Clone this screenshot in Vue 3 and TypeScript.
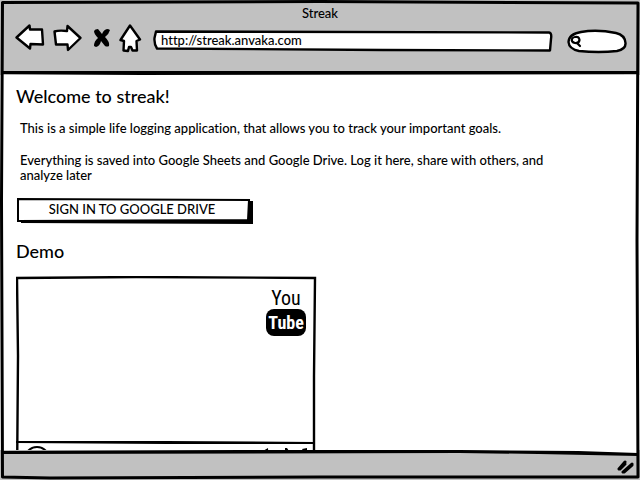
<script setup lang="ts">
import { ref } from 'vue'

const address = ref<string>('http://streak.anvaka.com')
const query = ref<string>('')
const pageTitle = 'Streak'
</script>

<template>
  <div class="window">
    <header class="chrome">
      <div class="title">{{ pageTitle }}</div>
      <div class="toolbar">
        <nav class="nav" aria-label="Browser navigation">
          <button class="nav-button" type="button" aria-label="Back">
            <svg width="30" height="28" viewBox="0 0 30 28">
              <path class="outline" d="M1.5 13.5 L14.5 1.5 L15 5.5 L27 5.5 L28 20.5 L15.5 20 L15 24.5 Z" />
            </svg>
          </button>
          <button class="nav-button" type="button" aria-label="Forward">
            <svg width="30" height="28" viewBox="0 0 30 28">
              <path class="outline" d="M1.5 7.5 Q6 6 14 7 L14.5 2 L27.5 14 L15 26 L14.5 20.5 L3 20.5 Z" />
            </svg>
          </button>
          <button class="nav-button stop" type="button" aria-label="Stop">
            <svg width="18" height="20" viewBox="0 0 18 20">
              <path d="M1 3 Q2 1 5 1 L9 6 Q11 1 15 1 L17 2 Q16 6 12 9 Q17 14 16 18 Q14 19 12 18 L8 13 Q7 18 3 19 L1 18 Q1 13 5 10 Q1 6 1 3 Z" />
            </svg>
          </button>
          <button class="nav-button home" type="button" aria-label="Home">
            <svg width="24" height="29" viewBox="0 0 24 29">
              <path class="outline" d="M11 1.5 L21 15.5 L17.5 17 L18 26.5 L13.5 26.5 L12 23 L10 23 L9 27 L4.5 26.5 L5 17 L1.5 16 Z" />
            </svg>
          </button>
        </nav>
        <div class="address">
          <svg class="shape" viewBox="0 0 400 22" preserveAspectRatio="none" aria-hidden="true">
            <path class="outline" d="M3 1.5 L396 2.5 Q399 3 398 9 L397 20.5 L230 20 L4 18.5 Q1 14 1.5 8 Z" />
          </svg>
          <input v-model="address" type="text" aria-label="Address" />
        </div>
        <div class="search">
          <svg class="shape" viewBox="0 0 60 25" preserveAspectRatio="none" aria-hidden="true">
            <path class="outline" d="M14 3 Q30 0 49 4 Q58 6 58.5 14 Q59 20 50 22 Q32 24 12 22 Q2 20 1.5 13 Q2 5 14 3 Z" />
          </svg>
          <svg class="glass" width="12" height="13" viewBox="0 0 12 13" aria-hidden="true">
            <path class="stroke" d="M5 2 Q9 1 9.5 5 Q9 8.5 5 8 Q1 7 2 4 Q3 2 5 2 M7 8 L10 11" />
          </svg>
          <input v-model="query" type="search" aria-label="Search" />
        </div>
      </div>
      <svg class="rule" viewBox="0 0 640 4" preserveAspectRatio="none" aria-hidden="true">
        <path d="M0 0 L640 0 L640 3 L140 4 L0 3 Z" />
      </svg>
    </header>

    <main class="content">
      <h1>Welcome to streak!</h1>
      <div class="copy">
        <p>This is a simple life logging application, that allows you to track your important goals.</p>
        <p>Everything is saved into Google Sheets and Google Drive. Log it here, share with others, and analyze later</p>
      </div>
      <button class="sign-in" type="button">
        <svg class="shape" viewBox="0 0 236 26" preserveAspectRatio="none" aria-hidden="true">
          <path d="M4 22 L232 22 L232 3 L236 3 L236 26 L4 25 Z" />
          <path class="edge" d="M1 1 L232 2 L231 22 L1 23 Z" />
        </svg>
        <span>SIGN IN TO GOOGLE DRIVE</span>
      </button>
      <h2>Demo</h2>
      <section class="player" aria-label="Demo video">
        <svg class="shape" viewBox="0 0 301 210" preserveAspectRatio="none" aria-hidden="true">
          <path class="player-edge" d="M1 209 L2 80 L1 2 L120 1 L299 2 L298 100 L298 209" />
        </svg>
        <div class="screen">
          <div class="logo">
            <span class="you">You</span>
            <span class="tube">Tube</span>
          </div>
        </div>
        <svg class="seam" viewBox="0 0 301 4" preserveAspectRatio="none" aria-hidden="true">
          <path d="M0 0 L150 0 L299 1 L299 3 L150 3 L0 2 Z" />
        </svg>
        <div class="controls">
          <button type="button" aria-label="Play">
            <svg width="26" height="26" viewBox="0 0 26 26">
              <path class="stroke" d="M13 2 C28 2 28 24 13 24 C-2 24 -2 2 13 2 M10 9 L18 14 L10 19 Z" />
            </svg>
          </button>
          <button type="button" aria-label="Volume and full screen">
            <svg width="46" height="24" viewBox="0 0 46 24">
              <path d="M0 6 L5 3 L6 20 L0 14 Z M22 3 L24 3 L26 6 L25 20 L22 20 Z M39 4 L44 3 L44 9 L42 9 Z" />
            </svg>
          </button>
        </div>
      </section>
    </main>

    <footer class="status">
      <svg class="rule" viewBox="0 0 640 6" preserveAspectRatio="none" aria-hidden="true">
        <path class="page-gap" d="M0 0 L460 0 L640 4 L640 0 Z" />
        <path d="M0 1 L240 0 L460 0 L580 1 L640 3 L640 6 L540 4 L460 3 L0 4 Z" />
      </svg>
      <svg class="grip" width="18" height="15" viewBox="0 0 18 15" aria-hidden="true">
        <path d="M2 9 L8 2 M6 12 L15 4 M3 9 L8 4 M7 12 L15 5" />
      </svg>
    </footer>

    <svg class="frame" viewBox="0 0 640 480" preserveAspectRatio="none" aria-hidden="true">
      <path d="M2.5 2.5 L320 1.5 L638 3 L637 240 L638 477 L320 477 L50 478 L2.5 477 L1.5 200 Z" />
    </svg>
  </div>
</template>

<style>
body {
  margin: 0;
  background: #fff;
}
</style>

<style scoped>
.window {
  position: relative;
  display: flex;
  flex-direction: column;
  height: 100vh;
  overflow: hidden;
  box-sizing: border-box;
  background: #fff;
  color: #000;
  font-family: Lato, "Open Sans", sans-serif;
  font-size: 13px;
  font-weight: 500;
  font-variant-ligatures: none;
  line-height: 15px;
}

button,
input {
  margin: 0;
  padding: 0;
  border: 0;
  background: none;
  color: inherit;
  font: inherit;
  font-variant-ligatures: none;
}

svg {
  display: block;
}

.chrome {
  position: relative;
  flex: none;
  height: 75px;
  background: #c1c1c1;
}

.title {
  padding-top: 6px;
  text-align: center;
}

.toolbar {
  display: flex;
  align-items: center;
  gap: 16px;
  height: 34px;
  padding: 0 13px 0 15px;
}

.nav {
  display: flex;
  align-items: center;
  gap: 8px;
}

.nav .stop {
  margin-left: 2px;
}

.nav-button {
  flex: none;
}

.outline {
  fill: #fff;
  stroke: #000;
  stroke-width: 2.4;
  stroke-linejoin: round;
}

.stroke {
  fill: none;
  stroke: #000;
  stroke-width: 2.2;
  stroke-linecap: round;
}

.shape {
  position: absolute;
  inset: 0;
  width: 100%;
  height: 100%;
}

.address {
  position: relative;
  flex: 1;
  height: 22px;
  margin: 6px -2px 0 -6px;
}

.address input {
  display: block;
  position: relative;
  width: 100%;
  height: 20px;
  padding: 0 8px;
  box-sizing: border-box;
  outline: 0;
}

.search {
  position: relative;
  display: flex;
  align-items: center;
  width: 60px;
  height: 25px;
  margin-top: 6px;
}

.glass {
  position: relative;
  flex: none;
  margin-left: 3px;
}

.search input {
  position: relative;
  width: 36px;
  outline: 0;
}

.rule {
  position: absolute;
  left: 2px;
  width: calc(100% - 4px);
}

.chrome .rule {
  bottom: 0;
  height: 4px;
}

.content {
  flex: 1;
  min-height: 0;
  overflow: hidden;
  padding: 11px 16px 0;
}

h1,
h2 {
  margin: 0;
  font-size: 18px;
  font-weight: 500;
  line-height: 20px;
}

.copy {
  padding: 15px 50px 0 4px;
}

p {
  margin: 0 0 17px;
}

.sign-in {
  position: relative;
  display: block;
  width: 236px;
  height: 26px;
  margin: -2px 0 0 1px;
  padding: 0 6px 3px 0;
}

.sign-in span {
  position: relative;
}

.edge {
  fill: #fff;
  stroke: #000;
  stroke-width: 2;
}

h2 {
  margin-top: 17px;
}

.player {
  position: relative;
  width: 301px;
  height: 210px;
  margin-top: 15px;
}

.player-edge {
  fill: none;
  stroke: #000;
  stroke-width: 2.4;
}

.screen {
  display: flex;
  justify-content: flex-end;
  height: 165px;
  padding-right: 11px;
}

.logo {
  display: flex;
  flex-direction: column;
  align-items: center;
  padding-top: 11px;
  font-family: "Liberation Sans Narrow", "Roboto Condensed", "Open Sans Condensed", "Liberation Sans", sans-serif;
}

.you {
  font-size: 20px;
  font-weight: 400;
  line-height: 22px;
}

.tube {
  width: 40px;
  height: 27px;
  border-radius: 8px;
  background: #000;
  color: #fff;
  font-size: 18px;
  font-weight: 700;
  line-height: 27px;
  text-align: center;
}

.seam {
  width: 100%;
  height: 4px;
}

.controls {
  display: flex;
  align-items: flex-start;
  justify-content: space-between;
  padding: 0 8px;
}

.status {
  position: relative;
  flex: none;
  display: flex;
  align-items: center;
  justify-content: flex-end;
  height: 30px;
  padding: 4px 5px 0;
  box-sizing: border-box;
  background: #c1c1c1;
}

.status .rule {
  top: 0;
  height: 6px;
}

.page-gap {
  fill: #fff;
}

.grip path {
  fill: none;
  stroke: #000;
  stroke-width: 3;
  stroke-linecap: round;
}

.frame {
  position: absolute;
  inset: 0;
  width: 100%;
  height: 100%;
  pointer-events: none;
}

.frame path {
  fill: none;
  stroke: #000;
  stroke-width: 3;
  stroke-linejoin: round;
}
</style>
